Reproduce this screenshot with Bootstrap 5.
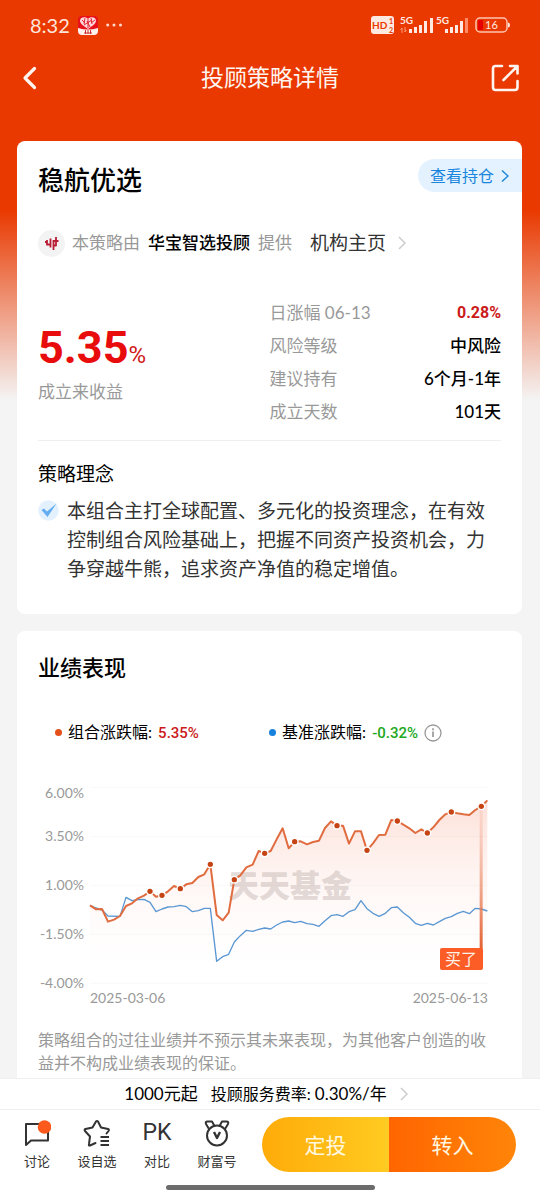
<!DOCTYPE html>
<html lang="zh-CN">
<head>
<meta charset="utf-8">
<meta name="viewport" content="width=device-width, initial-scale=1">
<title>投顾策略详情</title>
<link href="https://cdn.jsdelivr.net/npm/bootstrap@5.3.0/dist/css/bootstrap.min.css" rel="stylesheet">
<style>
  body { font-family: Lato, "Noto Sans CJK SC", sans-serif; background: #f4f4f4; color: #000; }
  svg { display: block; flex: none; }
  a { text-decoration: none; color: inherit; }
  .page-shell { background: linear-gradient(#e93900 0, #e93900 210px, #f4f4f4 400px); }
  .status-bar { height: 50px; padding: 0 30px; color: #ffe6dc; font-size: 20px; }
  .top-bar { height: 55px; margin-bottom: 36px; padding: 0 20px; color: #fff5f0; }
  .top-bar h1 { font-size: 23px; }
  .icon-btn { background: none; border: 0; padding: 0; color: inherit; width: 30px; }
  .panel { background: #fff; border: 0; border-radius: 8px; padding: 0 21px; }
  .content { padding: 0 18px 0 17px; gap: 17px; }
  .fund-head { min-height: 44px; margin-top: 18px; margin-right: -21px; }
  .fund-head h2 { font-size: 26px; }
  .hold-link { height: 33px; padding: 0 13px 0 12px; border-radius: 17px 0 0 17px; background: #e3f2fe; color: #1a86dd; font-size: 16px; gap: 7px; }
  .provider { height: 30px; margin-top: 25px; font-size: 17px; color: #999; }
  .avatar { width: 27px; height: 27px; background: #f3f3f3; margin-right: 7px; }
  .home-link { font-size: 19px; color: #333; margin-left: 18px; gap: 12px; }
  .semi { font-weight: 500; }
  .stats { margin-top: 38px; padding-bottom: 12px; border-bottom: 1px solid #efefef; }
  .gain { width: 50%; padding-top: 24px; }
  .num { font-family: Roboto, "Noto Sans CJK SC", sans-serif; font-weight: 700; }
  .facts .num { font-size: 16px; }
  .legend-item .num { font-size: 15px; font-weight: 500; }
  .gain .num { font-size: 45px; line-height: 56px; color: #e80c0c; }
  .gain .pct { font-size: 24px; line-height: 24px; color: #d01818; }
  .caption-line { font-size: 17px; line-height: 32px; color: #999; }
  .facts { font-size: 17px; line-height: 33px; }
  .facts dt { font-weight: 400; color: #999; }
  .facts dd { font-weight: 500; }
  .facts dd.num { font-weight: 700; }
  .rise { color: #cb1a1a; }
  .fall { color: #21a821; }
  .idea-title { font-size: 19px; line-height: 28px; margin-top: 19px; }
  .idea { font-size: 19px; line-height: 29px; color: #333; margin-top: 8px; padding-bottom: 31px; gap: 8px; }
  .perf { border-radius: 8px 8px 0 0; }
  .perf h2 { font-size: 22px; line-height: 32px; margin-top: 21px; }
  .legend-row { margin-top: 36px; padding-left: 17px; font-size: 16px; line-height: 24px; }
  .legend-item { flex: 0 0 48%; gap: 6px; white-space: nowrap; }
  .legend-item .num { margin-left: 2px; }
  .legend-dot { width: 7px; height: 7px; }
  .chart { width: 100%; margin-top: 30px; font-size: 14px; }
  .note { font-size: 16px; line-height: 23px; color: #999; margin-top: 18px; padding-right: 8px; }
  .dock { background: #fff; }
  .fee { height: 31px; border-top: 1px solid #efefef; font-size: 16px; gap: 13px; padding-right: 8px; }
  .fee-num { font-size: 17px; }
  .actions { border-top: 1px solid #efefef; padding: 7px 24px 0 7px; }
  .tab-btn { width: 60px; background: none; border: 0; padding: 0; font-size: 13px; line-height: 20px; color: #333; }
  .tab-btn svg { margin: 1px auto 4px; }
  .tab-word { display: block; margin: 1px 0 4px; font-family: Roboto, sans-serif; font-size: 23px; line-height: 28px; }
  .buy-group { margin-left: 15px; height: 55px; border-radius: 28px; overflow: hidden; }
  .buy-group button { border: 0; color: #fff8e0; font-size: 21px; }
  .plan { background: linear-gradient(90deg, #ffab08, #ffcb22); }
  .into { background: linear-gradient(90deg, #ff6500, #ff8508); }
  .home-indicator { padding: 13px 0 10px; }
  .home-bar { width: 209px; height: 5px; border-radius: 3px; background: #6c6c6c; }
</style>
</head>
<body>
<div class="page-shell min-vh-100 d-flex flex-column">
  <div class="status-bar d-flex align-items-center">
    <span>8:32</span>
    <svg class="ms-2" width="20" height="19" viewBox="0 0 20 19">
      <rect width="20" height="19" rx="4" fill="#e8101a"/>
      <path d="M10 13C4 9 2 7 2 4.500C2 1 8 0 10 3C12 0 18 1 18 4.500C18 7 16 9 10 13Z" fill="#ffd9dc"/>
      <path d="M4 4l3 3M7 2l-1 6M9 5l3 6M13 2l1 6M17 4l-4 3M6 9l8-5M10 3v9" stroke="#e02030" fill="none"/>
      <path d="M0 12Q10 15 20 12V15Q20 19 16 19H4Q0 19 0 15Z" fill="#fff2ee"/>
      <path d="M7.500 14v4M10 14v4M12.500 14v4M6 17h8" stroke="#c33" fill="none"/>
    </svg>
    <svg class="ms-2" width="18" height="6" viewBox="0 0 18 6" fill="#ffd9cc"><circle cx="1.700" cy="3" r="1.500"/><circle cx="8" cy="3" r="1.500"/><circle cx="14.500" cy="3" r="1.500"/></svg>
    <svg class="ms-auto" width="139" height="22" viewBox="371 14 139 22" fill="#ffe9e0" font-weight="700">
      <rect x="371" y="16" width="23" height="18" rx="3"/>
      <text x="372" y="29" font-size="10" fill="#e93900">HD</text>
      <text x="389" y="24" font-size="7" fill="#e93900">1</text><text x="389" y="33" font-size="7" fill="#e93900">2</text>
      <text x="400" y="24" font-size="10">5G</text><text x="436" y="24" font-size="10">5G</text>
      <path d="M402 33v-5l-1.500 2M405 27v5l1.500-2" stroke="#ff9b7a" fill="none"/>
      <path d="M409 29h3v4h-3zM414 27h3v6h-3zM419 25h3v8h-3zM424 21h3v12h-3zM430 18h3v15h-3zM445 29h3v4h-3zM450 27h3v6h-3zM455 25h3v8h-3zM460 21h3v12h-3z"/>
      <path d="M465 18h3v15h-3z" fill="#ff8a66"/>
      <rect x="476" y="18" width="31" height="14" rx="4" fill="none" stroke="#ffc4b0" stroke-width="1.500"/>
      <rect x="478" y="20" width="5" height="10" rx="1" fill="#e60000"/>
      <path d="M508 22.500q2 0 2 2.500t-2 2.500z"/>
      <text x="485" y="29" font-size="11" font-weight="400">16</text>
    </svg>
  </div>

  <header class="top-bar d-flex align-items-center justify-content-between">
    <button class="icon-btn" aria-label="返回"><svg width="18" height="24" viewBox="0 0 18 24" fill="none" stroke="currentColor" stroke-width="3.200" stroke-linecap="round" stroke-linejoin="round"><path d="M14.500 2.500L5 12l9.500 9.500"/></svg></button>
    <h1 class="m-0 fw-normal">投顾策略详情</h1>
    <button class="icon-btn" aria-label="分享"><svg width="30" height="28" viewBox="0 0 30 28" fill="none" stroke="currentColor" stroke-width="2.600" stroke-linejoin="round" stroke-linecap="round"><path d="M12 2H5.500Q3 2 3 4.500V23Q3 26 5.500 26H25Q27.500 26 27.500 23V17M13.500 16L27 2.500M20 2H27.500V9.500"/></svg></button>
  </header>

  <main class="content d-flex flex-column flex-grow-1">
    <section class="card panel">
      <div class="fund-head d-flex justify-content-between">
        <h2 class="m-0 align-self-center semi">稳航优选</h2>
        <a href="#" class="hold-link d-flex align-items-center">查看持仓
          <svg width="8" height="14" viewBox="0 0 8 14" fill="none" stroke="currentColor" stroke-width="1.500"><path d="M1 1.500L7 7L1 12.500"/></svg></a>
      </div>
      <div class="provider d-flex align-items-center">
        <span class="avatar rounded-circle d-flex align-items-center justify-content-center">
          <svg width="14" height="15" viewBox="0 0 14 15" fill="none" stroke="#b91c35" stroke-width="1.800"><path d="M2 4v4.500h3.500M5.500 2.500v9M8.500 4v10M11 1v9M8.500 5h5M8.500 9.500h3M0 6h2"/></svg>
        </span>
        <span>本策略由</span><span class="semi text-black mx-2">华宝智选投顾</span><span>提供</span>
        <a href="#" class="home-link d-flex align-items-center">机构主页
          <svg width="8" height="14" viewBox="0 0 8 14" fill="none" stroke="#ccc" stroke-width="1.500"><path d="M1 1L7 7L1 13"/></svg></a>
      </div>
      <div class="stats d-flex">
        <div class="gain">
          <div class="num">5.35<span class="pct fw-normal">%</span></div>
          <div class="caption-line">成立来收益</div>
        </div>
        <dl class="facts flex-grow-1 mb-0">
          <div class="d-flex justify-content-between"><dt>日涨幅 06-13</dt><dd class="m-0 num rise">0.28%</dd></div>
          <div class="d-flex justify-content-between"><dt>风险等级</dt><dd class="m-0">中风险</dd></div>
          <div class="d-flex justify-content-between"><dt>建议持有</dt><dd class="m-0">6个月-1年</dd></div>
          <div class="d-flex justify-content-between"><dt>成立天数</dt><dd class="m-0">101天</dd></div>
        </dl>
      </div>
      <h3 class="idea-title mb-0 fw-normal">策略理念</h3>
      <div class="idea d-flex">
        <svg class="mt-1" width="21" height="21" viewBox="0 0 21 21"><circle cx="10.500" cy="10.500" r="10.300" fill="#e2f1fd"/><path d="M3.500 10L6 8.500L9 11.500L18.500 3.500L9.500 17Z" fill="#64adf0"/></svg>
        <p class="m-0">本组合主打全球配置、多元化的投资理念，在有效控制组合风险基础上，把握不同资产投资机会，力争穿越牛熊，追求资产净值的稳定增值。</p>
      </div>
    </section>

    <section class="card panel perf flex-grow-1">
      <h2 class="mb-0 semi">业绩表现</h2>
      <div class="legend-row d-flex">
        <div class="legend-item d-flex align-items-center"><span class="legend-dot rounded-circle" style="background:#e4501a"></span><span>组合涨跌幅: <span class="num rise">5.35%</span></span></div>
        <div class="legend-item d-flex align-items-center"><span class="legend-dot rounded-circle" style="background:#1781dc"></span><span>基准涨跌幅: <span class="num fall">-0.32%</span></span>
          <svg width="18" height="18" viewBox="0 0 18 18" fill="none" stroke="#999" stroke-width="1.300"><circle cx="9" cy="9" r="8"/><path d="M9 7.500V13M9 4.300v1.900" stroke-width="1.700"/></svg></div>
      </div>
      <svg class="chart" viewBox="38 775 463 235" role="img" aria-label="业绩走势">
        <defs>
          <linearGradient id="area" x1="0" y1="0" x2="0" y2="1"><stop offset="0" stop-color="#fde0d8"/><stop offset="1" stop-color="#fff" stop-opacity="0"/></linearGradient>
          <linearGradient id="stem" x1="0" y1="0" x2="0" y2="1"><stop offset="0" stop-color="#f2a48a" stop-opacity=".2"/><stop offset="1" stop-color="#e2602f"/></linearGradient>
        </defs>
        <g transform="translate(80 780) scale(.33333)" fill="none" stroke-linejoin="round">
          <path fill="url(#area)" d="M30 376L48 388 66 387 84 425 102 419 120 408 138 378 156 370 174 355 192 347 210 334 228 350 246 346 264 334 282 318 301 326 319 313 337 309 355 291 373 283 391 253 410 405 428 421 446 398 463 299 481 286 499 262 518 254 536 213 554 220 572 213 590 178 608 145 626 205 644 185 662 184 681 193 699 186 717 182 735 144 753 124 771 137 789 137 807 191 825 154 843 154 861 211 879 190 897 165 916 164 934 120 952 123 970 134 988 145 1006 159 1024 148 1042 159 1060 142 1078 120 1096 103 1114 96 1132 100 1150 103 1168 105 1186 90 1204 79 1222 61V610H30Z"/>
          <path stroke="#000" stroke-opacity=".03" stroke-width="3" d="M30 22H1222M30 169H1222M30 316H1222M30 463H1222M30 610H1222"/>
        </g>
        <text x="228" y="897" font-size="31" font-weight="900" fill="#b5a5a1" fill-opacity=".4">天天基金</text>
        <g transform="translate(80 780) scale(.33333)" fill="none" stroke-linejoin="round">
          <path stroke="#5b97d3" stroke-width="4" d="M30 376L48 384 66 390 84 408 120 409 138 352 156 362 174 359 192 358 210 367 228 395 246 387 264 381 282 380 301 376 319 380 337 395 355 392 373 385 391 385 410 544 428 530 446 523 463 486 481 467 499 451 518 454 536 448 554 444 572 447 590 435 608 426 626 423 644 428 662 424 681 431 699 433 717 439 735 422 753 407 771 404 789 409 807 395 825 389 843 362 861 386 879 400 897 409 916 400 934 383 952 381 970 398 988 412 1006 430 1024 436 1042 430 1060 435 1078 425 1096 415 1114 410 1132 400 1150 394 1168 401 1186 385 1204 387 1222 393"/>
          <path stroke="#e06c40" stroke-width="6" d="M30 376L48 388 66 387 84 425 102 419 120 408 138 378 156 370 174 355 192 347 210 334 228 350 246 346 264 334 282 318 301 326 319 313 337 309 355 291 373 283 391 253 410 405 428 421 446 398 463 299 481 286 499 262 518 254 536 213 554 220 572 213 590 178 608 145 626 205 644 185 662 184 681 193 699 186 717 182 735 144 753 124 771 137 789 137 807 191 825 154 843 154 861 211 879 190 897 165 916 164 934 120 952 123 970 134 988 145 1006 159 1024 148 1042 159 1060 142 1078 120 1096 103 1114 96 1132 100 1150 103 1168 105 1186 90 1204 79 1222 61"/>
          <rect x="1199" y="79" width="9" height="430" fill="url(#stem)"/>
          <g fill="#c64414" stroke="#fff" stroke-width="4">
            <circle cx="210" cy="334" r="10"/><circle cx="246" cy="346" r="10"/><circle cx="301" cy="326" r="10"/><circle cx="391" cy="253" r="10"/><circle cx="463" cy="299" r="10"/><circle cx="554" cy="220" r="10"/><circle cx="644" cy="185" r="10"/><circle cx="771" cy="137" r="10"/><circle cx="861" cy="211" r="10"/><circle cx="952" cy="123" r="10"/><circle cx="1042" cy="159" r="10"/><circle cx="1114" cy="96" r="10"/><circle cx="1204" cy="79" r="10"/>
          </g>
        </g>
        <rect x="440" y="948" width="43" height="22" rx="2" fill="#fc5d27"/>
        <text x="445" y="965" font-size="16" fill="#fff3e8">买了</text>
        <g fill="#999">
          <g text-anchor="end"><text x="84" y="798">6.00%</text><text x="84" y="841">3.50%</text><text x="84" y="890">1.00%</text><text x="84" y="939">-1.50%</text><text x="84" y="988">-4.00%</text><text x="488" y="1003">2025-06-13</text></g>
          <text x="90" y="1003">2025-03-06</text>
        </g>
      </svg>
      <p class="note mb-0">策略组合的过往业绩并不预示其未来表现，为其他客户创造的收益并不构成业绩表现的保证。</p>
    </section>
  </main>

  <footer class="dock sticky-bottom">
    <a href="#" class="fee d-flex align-items-center justify-content-center"><span class="fee-num">1000元起</span><span>投顾服务费率: <span class="fee-num">0.30%/年</span></span>
      <svg width="8" height="14" viewBox="0 0 8 14" fill="none" stroke="#ccc" stroke-width="1.500"><path d="M1 1L7 7L1 13"/></svg></a>
    <div class="actions d-flex">
      <button class="tab-btn"><svg width="28" height="28" viewBox="0 0 28 28" fill="none" stroke="#333" stroke-width="2" stroke-linejoin="round"><path d="M3 26V5H25V21.500H8Z"/><circle cx="21.500" cy="8" r="6.800" fill="#fb5a1c" stroke="none"/></svg>讨论</button>
      <button class="tab-btn"><svg width="28" height="28" viewBox="0 0 28 28" fill="none" stroke="#333" stroke-width="2" stroke-linejoin="round" stroke-linecap="round"><path d="M12.500 25L7 27.500Q5.500 28 6 26L7 18.500L2 13Q1 11.500 2.500 11L9.500 9.500L13 3.500Q14 2.500 15 3.500L18 9.500L25 11Q26.500 11.500 25.500 13L23.500 15.500" transform="translate(0 -1)"/><path d="M17.500 18H26M17.500 22H26M17.500 26H26" stroke-linecap="butt"/></svg>设自选</button>
      <button class="tab-btn"><span class="tab-word">PK</span>对比</button>
      <button class="tab-btn"><svg width="28" height="28" viewBox="0 0 28 28" fill="none" stroke="#333" stroke-width="2" stroke-linejoin="round"><circle cx="14" cy="16.500" r="10"/><path d="M6 10L3 5Q2 2.500 4.500 2.500H9L11.500 7M22 10L25 5Q26 2.500 23.500 2.500H19L16.500 7"/><path d="M11 13L14 19L17 13" stroke-width="2.400"/></svg>财富号</button>
      <div class="buy-group d-flex flex-grow-1">
        <button class="plan w-50">定投</button><button class="into w-50">转入</button>
      </div>
    </div>
    <div class="home-indicator"><div class="home-bar mx-auto"></div></div>
  </footer>
</div>
<script src="https://cdn.jsdelivr.net/npm/bootstrap@5.3.0/dist/js/bootstrap.bundle.min.js"></script>
</body>
</html>
